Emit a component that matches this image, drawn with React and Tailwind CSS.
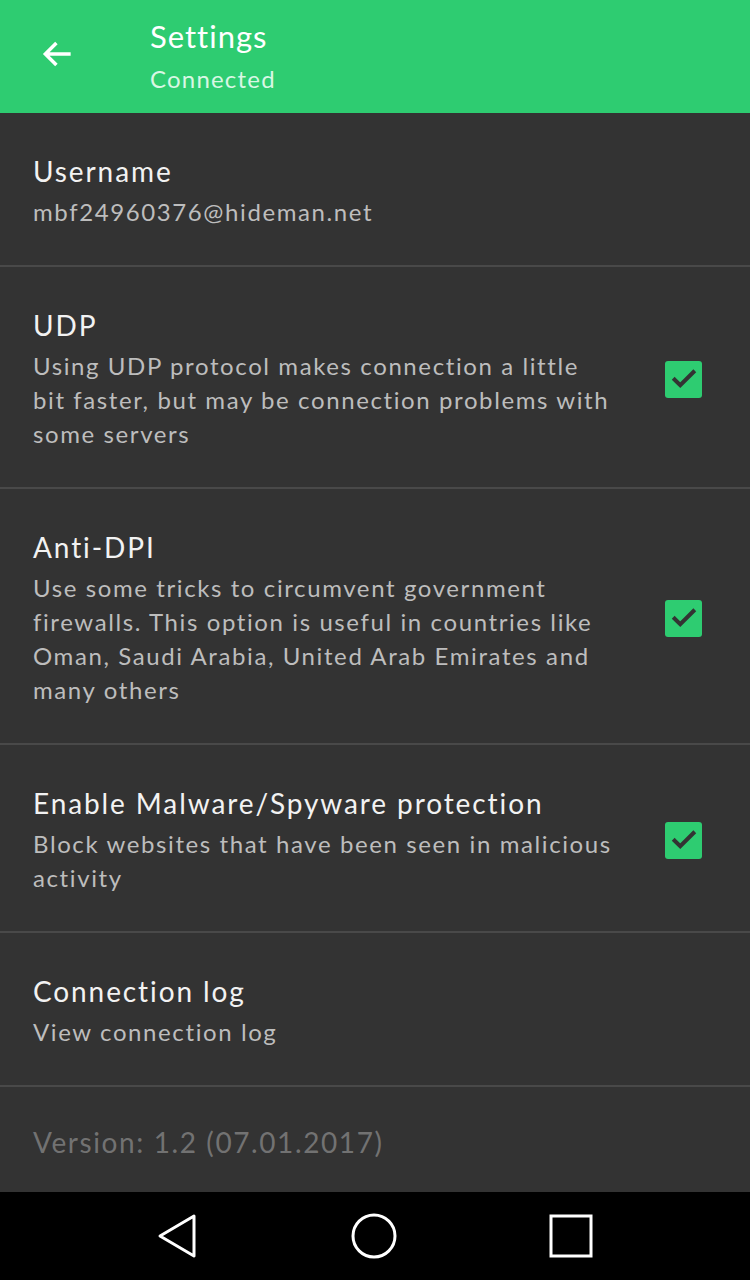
const items = [
  { title: "Username", lines: ["mbf24960376@hideman.net"] },
  {
    title: "UDP",
    lines: [
      "Using UDP protocol makes connection a little",
      "bit faster, but may be connection problems with",
      "some servers",
    ],
    checked: true,
  },
  {
    title: "Anti-DPI",
    lines: [
      "Use some tricks to circumvent government",
      "firewalls. This option is useful in countries like",
      "Oman, Saudi Arabia, United Arab Emirates and",
      "many others",
    ],
    checked: true,
  },
  {
    title: "Enable Malware/Spyware protection",
    lines: ["Block websites that have been seen in malicious", "activity"],
    checked: true,
  },
  { title: "Connection log", lines: ["View connection log"] },
];

const Checkbox = () => (
  <div className="w-[37px] h-[37px] rounded-[3px] bg-[#2ecc71] flex items-center justify-center shrink-0">
    <svg width="30" height="30" viewBox="0 0 24 24" fill="none">
      <path d="M4.5 12.5l4.5 4.5 10.5-10.5" stroke="#333333" strokeWidth="3.2" strokeLinecap="square" />
    </svg>
  </div>
);

export default function App() {
  return (
    <div className="w-[750px] h-[1280px] bg-[#333333] flex flex-col overflow-hidden font-['Lato','Liberation_Sans',sans-serif]">
      <header className="h-[113px] bg-[#2ecc71] flex items-start shrink-0">
        <div className="w-[150px] h-[108px] flex items-center pl-[39px]">
          <svg width="38" height="38" viewBox="0 0 24 24" fill="none" stroke="#ffffff" strokeWidth="2.2">
            <path d="M20 12H4M11 5l-7 7 7 7" />
          </svg>
        </div>
        <div className="pt-[15px]">
          <div className="text-[31px] leading-[42px] text-white tracking-[1px]">Settings</div>
          <div className="text-[24px] leading-[30px] text-[#d8f7e4] mt-[7px] tracking-[1.2px]">Connected</div>
        </div>
      </header>

      <main className="flex-1 flex flex-col">
        {items.map((it) => (
          <section key={it.title} className="border-b-2 border-[#494949] flex items-center pl-[33px] pr-[48px] pt-[40px] pb-[36px]">
            <div className="flex-1 whitespace-nowrap">
              <div className="text-[28px] leading-[36px] text-[#f2f2f2] tracking-[1.9px]">{it.title}</div>
              <div className="mt-[6px] text-[24px] leading-[34px] text-[#bdbdbd] tracking-[1.6px]">
                {it.lines.map((l) => (
                  <div key={l}>{l}</div>
                ))}
              </div>
            </div>
            {it.checked && <Checkbox />}
          </section>
        ))}
        <div className="flex-1 flex items-center pl-[33px] pt-[4px]">
          <span className="text-[28px] text-[#727272] tracking-[1.6px]">Version: 1.2 (07.01.2017)</span>
        </div>
      </main>

      <nav className="h-[88px] bg-black flex items-center justify-around px-[80px] shrink-0">
        <svg width="46" height="46" viewBox="0 0 46 46" fill="none" stroke="#ffffff" strokeWidth="3">
          <path d="M39 3L5 23l34 20Z" strokeLinejoin="round" />
        </svg>
        <svg width="48" height="48" viewBox="0 0 48 48" fill="none" stroke="#ffffff" strokeWidth="3">
          <circle cx="24" cy="24" r="21" />
        </svg>
        <svg width="48" height="48" viewBox="0 0 48 48" fill="none" stroke="#ffffff" strokeWidth="3">
          <rect x="4" y="4" width="40" height="40" />
        </svg>
      </nav>
    </div>
  );
}
